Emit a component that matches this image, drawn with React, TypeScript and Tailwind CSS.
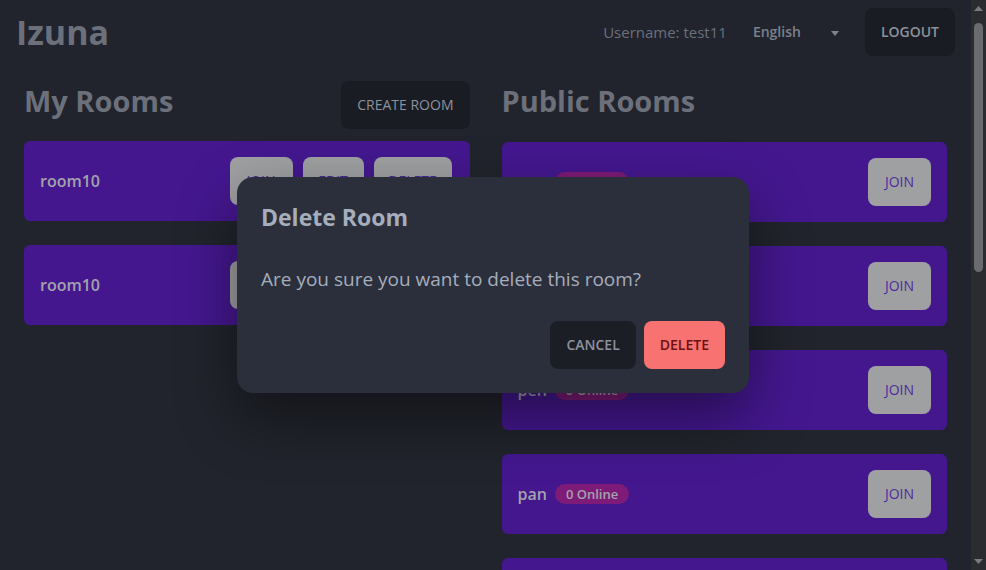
import React from "react";

const font = "font-['Open_Sans','Noto_Sans',sans-serif]";

function MyRoomCard({ name }: { name: string }) {
  return (
    <div className="flex h-20 items-center justify-between rounded-md bg-[#44178f] pl-4 pr-[18px]">
      <span className="text-base font-semibold text-[#a3a3ab]">{name}</span>
      <div className="flex gap-[10px]">
        <button className="h-12 w-[63px] rounded-lg bg-[#9fa0a2] text-sm text-[#4c2a9e]">JOIN</button>
        <button className="h-12 w-[61px] rounded-lg bg-[#9fa0a2] text-sm text-[#4c2a9e]">EDIT</button>
        <button className="h-12 w-[78px] rounded-lg bg-[#9fa0a2] text-sm text-[#4c2a9e]">DELETE</button>
      </div>
    </div>
  );
}

function PublicRoomCard({ name, online }: { name: string; online: number }) {
  return (
    <div className="flex h-20 shrink-0 items-center justify-between rounded-md bg-[#44178f] px-4">
      <div className="flex items-center gap-2">
        <span className="text-base font-semibold text-[#a3a3ab]">{name}</span>
        <span className="rounded-full bg-[#7e1b78] px-[11px] text-[13px] leading-5 font-semibold text-[#a3a3ab]">
          {online} Online
        </span>
      </div>
      <button className="h-12 w-[63px] rounded-lg bg-[#9fa0a2] text-sm text-[#4c2a9e]">JOIN</button>
    </div>
  );
}

function ScrollBar() {
  return (
    <div className="flex h-full w-[15px] shrink-0 flex-col items-center bg-[#2a2c30]">
      <div className="flex h-[17px] items-center justify-center">
        <svg width="9" height="5" viewBox="0 0 9 5">
          <path d="M0 5 L4.5 0 L9 5 Z" fill="#7a7b7e" />
        </svg>
      </div>
      <div className="mt-[6px] h-[249px] w-[9px] rounded-full bg-[#6b6b6d]" />
      <div className="flex-1" />
      <div className="flex h-[17px] items-center justify-center">
        <svg width="9" height="5" viewBox="0 0 9 5">
          <path d="M0 0 L9 0 L4.5 5 Z" fill="#7a7b7e" />
        </svg>
      </div>
    </div>
  );
}

export default function App() {
  return (
    <div className={`relative flex h-[570px] w-full overflow-hidden bg-[#21242c] ${font}`}>
      <div className="h-full min-w-0 flex-1 overflow-hidden">
        <header className="flex items-center justify-between px-4 pt-2">
          <h1 className="text-[34px] leading-[48px] font-bold text-[#6b707b]">Izuna</h1>
          <div className="flex items-center">
            <span className="text-[15px] text-[#6b707b]">Username: test11</span>
            <div className="ml-[10px] flex h-12 w-[116px] items-center justify-between pl-4 pr-[14px]">
              <span className="text-sm font-semibold text-[#7c818c]">English</span>
              <svg width="8" height="5" viewBox="0 0 8 5" className="mt-[2px]">
                <path d="M0 0 L8 0 L4 5 Z" fill="#7c818c" />
              </svg>
            </div>
            <button className="ml-3 h-12 rounded-lg bg-[#191c23] px-4 text-sm font-semibold text-[#8d929c]">
              LOGOUT
            </button>
          </div>
        </header>

        <main className="mt-[25px] grid grid-cols-2 gap-8 px-6 pb-6">
          <section>
            <div className="mb-3 flex h-12 items-start justify-between">
              <h2 className="text-[29px] leading-[40px] font-bold text-[#6b707b]">My Rooms</h2>
              <button className="h-12 rounded-lg bg-[#191c23] px-4 text-sm text-[#8d929c]">CREATE ROOM</button>
            </div>
            <div className="flex flex-col gap-6">
              <MyRoomCard name="room10" />
              <MyRoomCard name="room10" />
            </div>
          </section>
          <section>
            <div className="mb-[13px] flex h-12 items-start">
              <h2 className="text-[29px] leading-[40px] font-bold text-[#6b707b]">Public Rooms</h2>
            </div>
            <div className="flex flex-col gap-6">
              <PublicRoomCard name="test" online={0} />
              <PublicRoomCard name="room10" online={0} />
              <PublicRoomCard name="pen" online={0} />
              <PublicRoomCard name="pan" online={0} />
              <PublicRoomCard name="room" online={0} />
            </div>
          </section>
        </main>
      </div>

      <ScrollBar />

      <div className="absolute inset-0 flex items-center justify-center">
        <div className="w-[512px] rounded-2xl bg-[#2a2f3b] p-6 shadow-[0_25px_60px_rgba(0,0,0,0.45)]">
          <h3 className="text-[23px] leading-8 font-bold text-[#a6adbb]">Delete Room</h3>
          <p className="mt-8 text-[19px] leading-7 text-[#a6adbb]">Are you sure you want to delete this room?</p>
          <div className="mt-7 flex justify-end gap-2">
            <button className="h-12 rounded-lg bg-[#1b1e25] px-4 text-sm font-semibold text-[#8d929c]">CANCEL</button>
            <button className="h-12 rounded-lg bg-[#f87272] px-4 text-sm font-semibold text-[#6b1111]">DELETE</button>
          </div>
        </div>
      </div>
    </div>
  );
}
